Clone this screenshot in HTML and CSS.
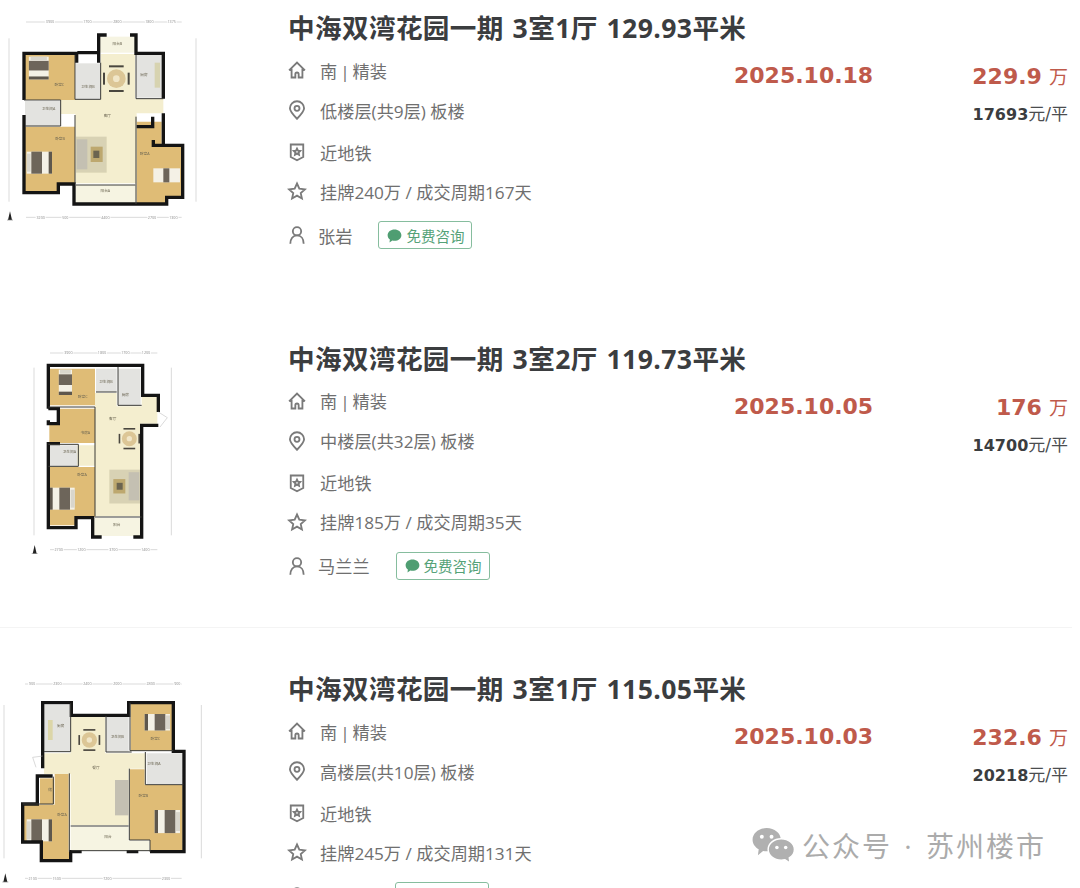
FILE: index.html
```html
<!DOCTYPE html>
<html lang="zh-CN">
<head>
  <meta charset="UTF-8" />
  <meta name="viewport" content="width=device-width, initial-scale=1" />
  <title>成交记录</title>
  <link rel="stylesheet" href="styles.css">
</head>
<body>

  <!-- shared icons and furniture -->
  <svg class="sprite" aria-hidden="true">
    <defs>
      <symbol id="i-house" viewBox="0 0 24 24"><path d="M2.500 12.500 12 3l9.500 9.500M5.500 10.500V21H10v-4a2 2 0 0 1 4 0v4h4.500V10.500"/></symbol>
      <symbol id="i-pin" viewBox="0 0 24 24"><path d="M12 22.500C7 17.500 3.500 14 3.500 10a8.500 8.500 0 0 1 17 0c0 4-3.500 7.500-8.500 12.500Z"/><circle cx="12" cy="10" r="3"/></symbol>
      <symbol id="i-shield" viewBox="0 0 24 24"><path d="M4.500 3h15v15L12 22l-7.500-4Z"/><path class="solid" d="m12 8 1.200 2.500 2.600.3-1.900 1.800.5 2.600-2.400-1.300-2.400 1.300.5-2.600-1.900-1.800 2.600-.3Z"/></symbol>
      <symbol id="i-star" viewBox="0 0 24 24"><path d="m12 3 2.800 6.200 6.700.8-5 4.500 1.400 6.500-5.900-3.400L6.100 21l1.400-6.500-5-4.500 6.700-.8Z"/></symbol>
      <symbol id="i-user" viewBox="0 0 24 24"><circle cx="12" cy="7.500" r="5"/><path d="M4 22.500c0-6 3-10 8-10s8 4 8 10"/></symbol>
      <symbol id="i-chat" viewBox="0 0 24 24"><path d="M12 2.500c6 0 11 3.900 11 9s-5 9-11 9c-1.200 0-2.300-.2-3.400-.5L4 23l.6-4.600C2.400 16.700 1 14.300 1 11.500c0-5.100 5-9 11-9Z"/><circle class="eye" cx="8.500" cy="11" r="1.500"/><circle class="eye" cx="15.500" cy="11" r="1.500"/></symbol>
      <g id="bed">
        <rect width="76" height="66" fill="#f4f1e6"/>
        <rect x="14" width="32" height="66" fill="#6d655a"/>
        <rect y="6" width="12" height="54" fill="#d9d6cc"/>
        <rect x="66" width="10" height="66" fill="#5e574d"/>
      </g>
      <g id="dining">
        <rect x="-22" y="-40" width="44" height="6" fill="#4a473f"/>
        <rect x="-22" y="34" width="44" height="6" fill="#4a473f"/>
        <rect x="-40" y="-18" width="6" height="36" fill="#4a473f"/>
        <rect x="34" y="-18" width="6" height="36" fill="#4a473f"/>
        <circle r="28" fill="#dcc696"/>
        <circle r="10" fill="#f1e6c8"/>
      </g>
      <g id="lounge">
        <rect width="92" height="108" fill="#d8d2b4"/>
        <rect x="2" y="8" width="32" height="90" fill="#c4c0b2"/>
        <rect x="44" y="30" width="36" height="46" fill="#bda86f"/>
        <rect x="52" y="42" width="18" height="22" fill="#6b6450"/>
      </g>
      <g id="north">
        <path d="M0-14 6 12H-6Z" fill="#222"/>
        <path d="M-9 12H9" stroke="#888" stroke-width="2"/>
      </g>
    </defs>
  </svg>

  <main class="records">

    <article class="listing">
      <div class="listing-plan">
        <svg class="plan" viewBox="0 0 810 780">
          <path class="dim" d="M78 66H545M78 652H545M27 115V605M588 115V605"/>
          <text class="dim-text" x="150" y="70">3900</text><text class="dim-text" x="262" y="70">1700</text><text class="dim-text" x="352" y="70">2800</text><text class="dim-text" x="448" y="70">1800</text><text class="dim-text" x="515" y="70">1375</text>
          <text class="dim-text" x="122" y="656">3200</text><text class="dim-text" x="196" y="656">500</text><text class="dim-text" x="316" y="656">4400</text><text class="dim-text" x="456" y="656">2700</text><text class="dim-text" x="520" y="656">1300</text>
          <rect class="tan" x="75" y="165" width="150" height="135"/>
          <path class="tan" d="M75 380H225V550H175V578H75Z"/>
          <path class="tan" d="M410 365H485V440H545V590H500V612H410Z"/>
          <rect class="grey" x="228" y="190" width="74" height="108"/>
          <rect class="grey" x="408" y="165" width="80" height="128"/>
          <rect class="grey" x="75" y="303" width="106" height="76"/>
          <rect class="cream" x="300" y="110" width="108" height="48"/>
          <rect class="cream" x="226" y="555" width="182" height="55"/>
          <path class="floor" d="M302 162H405V296H490V340H410V550H226V342H182V300H302Z"/>
          <use href="#lounge" x="228" y="410"/>
          <use href="#dining" transform="translate(349 236)"/>
          <use href="#bed" transform="translate(146 170) rotate(90) scale(.9)"/>
          <use href="#bed" x="80" y="455"/>
          <rect x="460" y="505" width="80" height="42" fill="#f4f1e6"/><rect x="490" y="505" width="18" height="42" fill="#6d655a"/>
          <rect x="464" y="188" width="16" height="75" fill="#d7d3b0"/>
          <path class="wall" d="M230 188V160H72V300M72 345V578H175V552H222V612H408M408 612H500V592H548V436H460V420M490 435V340M490 296V160H408V100M408 100V110M296 158V105H320M390 105H410M296 188V158H232"/>
          <path class="wall-thin" d="M225 345V550M408 350V612M72 300H182V378H75M225 165V298H302V188M408 165V296H490M406 555H228"/>
          <path class="wall" d="M458 350V380H410"/>
          <use href="#north" transform="translate(30 648)"/>
          <text class="room-text" x="352" y="136">阳台B</text><text class="room-text" x="178" y="257">卧室C</text><text class="room-text" x="264" y="263">卫生间B</text><text class="room-text" x="432" y="227">厨房</text><text class="room-text" x="322" y="350">客厅</text><text class="room-text" x="146" y="330">卫生间A</text><text class="room-text" x="180" y="420">卧室B</text><text class="room-text" x="434" y="466">卧室A</text><text class="room-text" x="316" y="577">阳台A</text>
        </svg>
      </div>
      <div class="listing-info">
        <h2 class="listing-title">中海双湾花园一期 3室1厅 129.93平米</h2>
        <ul class="meta">
          <li><svg class="icon"><use href="#i-house"/></svg><span class="tight">南 | 精装</span></li>
          <li><svg class="icon"><use href="#i-pin"/></svg><span>低楼层(共9层) 板楼</span></li>
          <li><svg class="icon"><use href="#i-shield"/></svg><span>近地铁</span></li>
          <li><svg class="icon"><use href="#i-star"/></svg><span>挂牌240万 / 成交周期167天</span></li>
          <li class="agent"><svg class="icon"><use href="#i-user"/></svg><span class="agent-name">张岩</span><a class="consult"><svg class="chat"><use href="#i-chat"/></svg>免费咨询</a></li>
        </ul>
      </div>
      <div class="listing-date">2025.10.18</div>
      <div class="listing-price">
        <p class="price"><b>229.9</b> <span>万</span></p>
        <p class="unit-price"><b>17693</b>元/平</p>
      </div>
    </article>

    <article class="listing listing-ruled">
      <div class="listing-plan">
        <svg class="plan" viewBox="0 0 810 780">
          <g transform="translate(0 28)">
            <path class="dim" d="M150 38H472M150 628H472M102 82V585M514 82V585"/>
            <text class="dim-text" x="205" y="42">3900</text><text class="dim-text" x="306" y="42">1800</text><text class="dim-text" x="376" y="42">1700</text><text class="dim-text" x="438" y="42">1200</text>
            <text class="dim-text" x="176" y="632">2700</text><text class="dim-text" x="244" y="632">1200</text><text class="dim-text" x="340" y="632">3700</text><text class="dim-text" x="436" y="632">1400</text>
            <path class="tan" d="M148 85H285V195H148Z"/>
            <path class="tan" d="M178 205H285V308H148V250H178Z"/>
            <path class="tan" d="M148 380H285V530H228V555H148Z"/>
            <rect class="grey" x="288" y="85" width="62" height="70"/>
            <rect class="grey" x="354" y="85" width="68" height="110"/>
            <rect class="grey" x="148" y="315" width="84" height="64"/>
            <rect class="cream" x="282" y="533" width="140" height="54"/>
            <path class="floor" d="M285 158H350V198H425V170H472V250H422V528H285V376H232V315H285Z"/>
            <use href="#lounge" transform="translate(420 388) scale(-1 .94)"/>
            <use href="#dining" transform="translate(388 295) scale(.8)"/>
            <use href="#bed" transform="translate(216 88) rotate(90) scale(1 .6)" />
            <use href="#bed" transform="translate(224 442) scale(-1 1)"/>
            <path class="wall" d="M145 205V75H428V165H475V215M475 255H425V590H400M305 590H278V532H228V562H145V310H180M145 240V250H175V205H145"/>
            <path class="wall-thin" d="M145 200H285V528M354 80V195H425M288 155H350M145 312H235V378H145M285 530H425"/>
            <path class="dim" d="M475 215 502 232 480 260"/>
            <use href="#north" transform="translate(104 628)"/>
            <text class="room-text" x="248" y="172">卧室C</text><text class="room-text" x="318" y="127">卫生间B</text><text class="room-text" x="376" y="166">厨房</text><text class="room-text" x="338" y="240">客厅</text><text class="room-text" x="256" y="280">书房A</text><text class="room-text" x="208" y="338">卫生间A</text><text class="room-text" x="246" y="408">卧室A</text><text class="room-text" x="350" y="556">阳台</text>
          </g>
        </svg>
      </div>
      <div class="listing-info">
        <h2 class="listing-title">中海双湾花园一期 3室2厅 119.73平米</h2>
        <ul class="meta">
          <li><svg class="icon"><use href="#i-house"/></svg><span class="tight">南 | 精装</span></li>
          <li><svg class="icon"><use href="#i-pin"/></svg><span>中楼层(共32层) 板楼</span></li>
          <li><svg class="icon"><use href="#i-shield"/></svg><span>近地铁</span></li>
          <li><svg class="icon"><use href="#i-star"/></svg><span>挂牌185万 / 成交周期35天</span></li>
          <li class="agent"><svg class="icon"><use href="#i-user"/></svg><span class="agent-name">马兰兰</span><a class="consult"><svg class="chat"><use href="#i-chat"/></svg>免费咨询</a></li>
        </ul>
      </div>
      <div class="listing-date">2025.10.05</div>
      <div class="listing-price">
        <p class="price"><b>176</b> <span>万</span></p>
        <p class="unit-price"><b>14700</b>元/平</p>
      </div>
    </article>

    <article class="listing">
      <div class="listing-plan">
        <svg class="plan" viewBox="0 0 810 780">
          <g transform="translate(0 27)">
            <path class="dim" d="M75 42H545M75 625H545M12 105V565M604 105V565"/>
            <text class="dim-text" x="96" y="46">900</text><text class="dim-text" x="172" y="46">2300</text><text class="dim-text" x="262" y="46">2400</text><text class="dim-text" x="352" y="46">2000</text><text class="dim-text" x="452" y="46">2800</text><text class="dim-text" x="532" y="46">900</text>
            <text class="dim-text" x="98" y="629">2100</text><text class="dim-text" x="170" y="629">1500</text><text class="dim-text" x="322" y="629">7200</text><text class="dim-text" x="498" y="629">2300</text>
            <rect class="grey" x="132" y="105" width="78" height="140"/>
            <rect class="grey" x="318" y="140" width="68" height="106"/>
            <path class="grey" d="M440 250H548V342H440Z"/>
            <rect class="tan" x="392" y="102" width="124" height="140"/>
            <path class="tan" d="M390 298H434V345H548V545H450V510H390Z"/>
            <rect class="tan" x="120" y="325" width="42" height="78"/>
            <path class="tan" d="M164 310H206V545H214V572H126V516H72V404H164Z"/>
            <path class="cream" d="M212 470H386V512H448V542H212Z"/>
            <path class="floor" d="M212 140H316V250H436V296H386V466H212V312H132V250H212Z"/>
            <rect x="345" y="330" width="40" height="106" fill="#c4c0b2"/>
            <use href="#dining" transform="translate(268 210) scale(.82)"/>
            <use href="#bed" transform="translate(510 132) scale(-1 .75)"/>
            <use href="#bed" transform="translate(540 420) scale(-1 1.05)"/>
            <use href="#bed" x="80" y="448"/>
            <rect x="144" y="150" width="14" height="60" fill="#dcd6a8"/>
            <path class="wall" d="M128 250V98H214V136H316M316 136H386V98H520V244H552V545H450M415 545H380M245 545H212V572H124V516H68V402H112V318H158M128 250V295"/>
            <path class="wall-thin" d="M212 100V245H132M318 138V246H395M390 98V242H520M436 246V344H550M388 296V510H450V545M160 320V402H68M208 310V545M386 468H212M214 542H450"/>
            <path class="dim" d="M128 258 98 262 108 292"/>
            <use href="#north" transform="translate(16 624)"/>
            <text class="room-text" x="182" y="170">厨房</text><text class="room-text" x="288" y="297">餐厅</text><text class="room-text" x="352" y="203">卫生间B</text><text class="room-text" x="466" y="210">卧室C</text><text class="room-text" x="462" y="285">卫生间A</text><text class="room-text" x="430" y="380">卧室B</text><text class="room-text" x="186" y="437">卧室A</text><text class="room-text" x="324" y="503">阳台</text><text class="room-text" x="150" y="362">储</text>
          </g>
        </svg>
      </div>
      <div class="listing-info">
        <h2 class="listing-title">中海双湾花园一期 3室1厅 115.05平米</h2>
        <ul class="meta">
          <li><svg class="icon"><use href="#i-house"/></svg><span class="tight">南 | 精装</span></li>
          <li><svg class="icon"><use href="#i-pin"/></svg><span>高楼层(共10层) 板楼</span></li>
          <li><svg class="icon"><use href="#i-shield"/></svg><span>近地铁</span></li>
          <li><svg class="icon"><use href="#i-star"/></svg><span>挂牌245万 / 成交周期131天</span></li>
          <!-- only the top edge of this row's button shows above the fold -->
          <li class="agent"><svg class="icon"><use href="#i-user"/></svg><span class="agent-name agent-name-long"></span><a class="consult"></a></li>
        </ul>
      </div>
      <div class="listing-date">2025.10.03</div>
      <div class="listing-price">
        <p class="price"><b>232.6</b> <span>万</span></p>
        <p class="unit-price"><b>20218</b>元/平</p>
      </div>
    </article>

  </main>

  <!-- overlay stamp, sits on top of the last row -->
  <div class="watermark">
    <svg class="watermark-logo" viewBox="0 0 44 38">
      <path d="M15 1c8 0 14.500 5.300 14.500 12s-6.500 12-14.500 12c-1.300 0-2.500-.1-3.700-.4L6 29l.8-6.200C3 20.600.5 17 .5 13 .5 6.300 7 1 15 1Z"/>
      <circle class="eye" cx="10" cy="10" r="2"/><circle class="eye" cx="20" cy="10" r="2"/>
      <path class="front" d="M30 12c7.500 0 13.500 4.900 13.500 11 0 3.600-2.100 6.800-5.300 8.800L39 37l-5.200-3.300c-1.200.2-2.500.4-3.800.4-7.500 0-13.500-5-13.500-11.100S22.500 12 30 12Z"/>
      <circle class="eye" cx="25.500" cy="21" r="1.800"/><circle class="eye" cx="34.500" cy="21" r="1.800"/>
    </svg>
    <span class="watermark-text">公众号 · 苏州楼市</span>
  </div>

</body>
</html>
```

FILE: styles.css
```css
/* page is clipped to the window, last row runs off the bottom */
html, body {
  height: 888px;
  overflow: hidden;
}

body {
  margin: 0;
  background: #fff;
  color: #6f6f6f;
  font-family: "Open Sans", "Noto Sans CJK SC", sans-serif;
  position: relative;
}

.sprite {
  display: none;
}

.records {
  width: 1072px;
}

.listing {
  display: flex;
  box-sizing: border-box;
  height: 297px;
  margin-bottom: 33.5px;
}

.listing-ruled {
  border-bottom: 1px solid #f4f4f4;
}

/* floor plan column */
.listing-plan {
  width: 287px;
  flex: none;
}

.plan {
  display: block;
  width: 270px;
  height: 260px;
  filter: blur(0.7px);
}

.plan .tan { fill: #dfbc76; }
.plan .grey { fill: #e3e3e0; }
.plan .cream { fill: #f6f4e2; }
.plan .floor { fill: #f4eecf; }

.plan .wall {
  fill: none;
  stroke: #141414;
  stroke-width: 10;
}

.plan .wall-thin {
  fill: none;
  stroke: #3a3a36;
  stroke-width: 3;
}

.plan .dim {
  fill: none;
  stroke: #b5b5b5;
  stroke-width: 1.5;
}

.plan .dim-text {
  fill: #8d8d8d;
  font-size: 11px;
  text-anchor: middle;
  paint-order: stroke;
  stroke: #fff;
  stroke-width: 6px;
}

.plan .room-text {
  fill: #6b6552;
  font-size: 11px;
  text-anchor: middle;
}

/* title and attribute list */
.listing-info {
  width: 447px;
  flex: none;
}

.listing-title {
  margin: 0 0 0 1px;
  padding-top: 4px;
  height: 46px;
  line-height: 48px;
  font-size: 26.6px;
  font-weight: 700;
  letter-spacing: 0.38px;
  word-spacing: 1.5px;
  color: #3b3d3f;
  white-space: nowrap;
}

.meta {
  list-style: none;
  margin: 0;
  padding: 0;
}

.meta li {
  display: flex;
  align-items: center;
  height: 40px;
  font-size: 17.2px;
  white-space: nowrap;
}

.meta li:nth-child(3) {
  margin-top: 2px;
}

.meta li:nth-child(4) {
  margin-top: -1px;
}

.tight {
  word-spacing: -1.5px;
}

.icon {
  flex: none;
  width: 20px;
  height: 20px;
  margin-right: 13px;
  fill: none;
  stroke: #7a7a7a;
  stroke-width: 2.2;
}

.icon .solid {
  fill: #7a7a7a;
  stroke: none;
}

.meta .agent {
  margin-top: 4px;
}

.agent .icon {
  margin-right: 11px;
}

.agent-name {
  margin-right: 26px;
}

.agent-name-long {
  width: 51px;
}

.consult {
  display: flex;
  align-items: center;
  gap: 4px;
  box-sizing: border-box;
  width: 94px;
  height: 28px;
  padding-left: 8px;
  border: 1px solid #86bd9e;
  border-radius: 3px;
  color: #55a278;
  font-size: 14.5px;
}

.chat {
  width: 15px;
  height: 15px;
  fill: #4f9e72;
}

.chat .eye {
  fill: #fff;
}

/* date and price columns */
.listing-date {
  width: 139px;
  flex: none;
  margin-top: 60px;
  height: 32px;
  line-height: 32px;
  font-family: "DejaVu Sans", sans-serif;
  font-size: 22px;
  font-weight: 700;
  color: #bf5a4b;
  white-space: nowrap;
}

.listing-price {
  flex: 1;
  padding-right: 4px;
  text-align: right;
  font-family: "DejaVu Sans", "Noto Sans CJK SC", sans-serif;
}

.listing-price p {
  margin: 0;
  white-space: nowrap;
}

.listing-price .price {
  margin-top: 60px;
  height: 32px;
  line-height: 32px;
  color: #bf5a4b;
}

.price b {
  font-size: 22px;
}

.price span {
  margin-left: 2px;
  font-family: "Noto Sans CJK SC", sans-serif;
  font-size: 19px;
}

.listing-price .unit-price {
  margin-top: 7px;
  line-height: 30px;
  font-size: 17px;
  color: #4b4d4f;
}

.unit-price b {
  font-size: 16px;
  color: #3b3d3f;
}

/* watermark */
.watermark {
  position: absolute;
  left: 752px;
  top: 825px;
  display: flex;
  align-items: center;
  gap: 7px;
}

.watermark-logo {
  width: 43px;
  height: 37px;
  fill: #b0b0b0;
}

.watermark-logo .eye {
  fill: #fff;
}

.watermark-logo .front {
  stroke: #fff;
  stroke-width: 1.5;
}

.watermark-text {
  font-family: "Open Sans", "Noto Sans CJK SC", sans-serif;
  font-size: 28px;
  letter-spacing: 2px;
  word-spacing: 3px;
  color: #ababab;
  white-space: nowrap;
}
```
